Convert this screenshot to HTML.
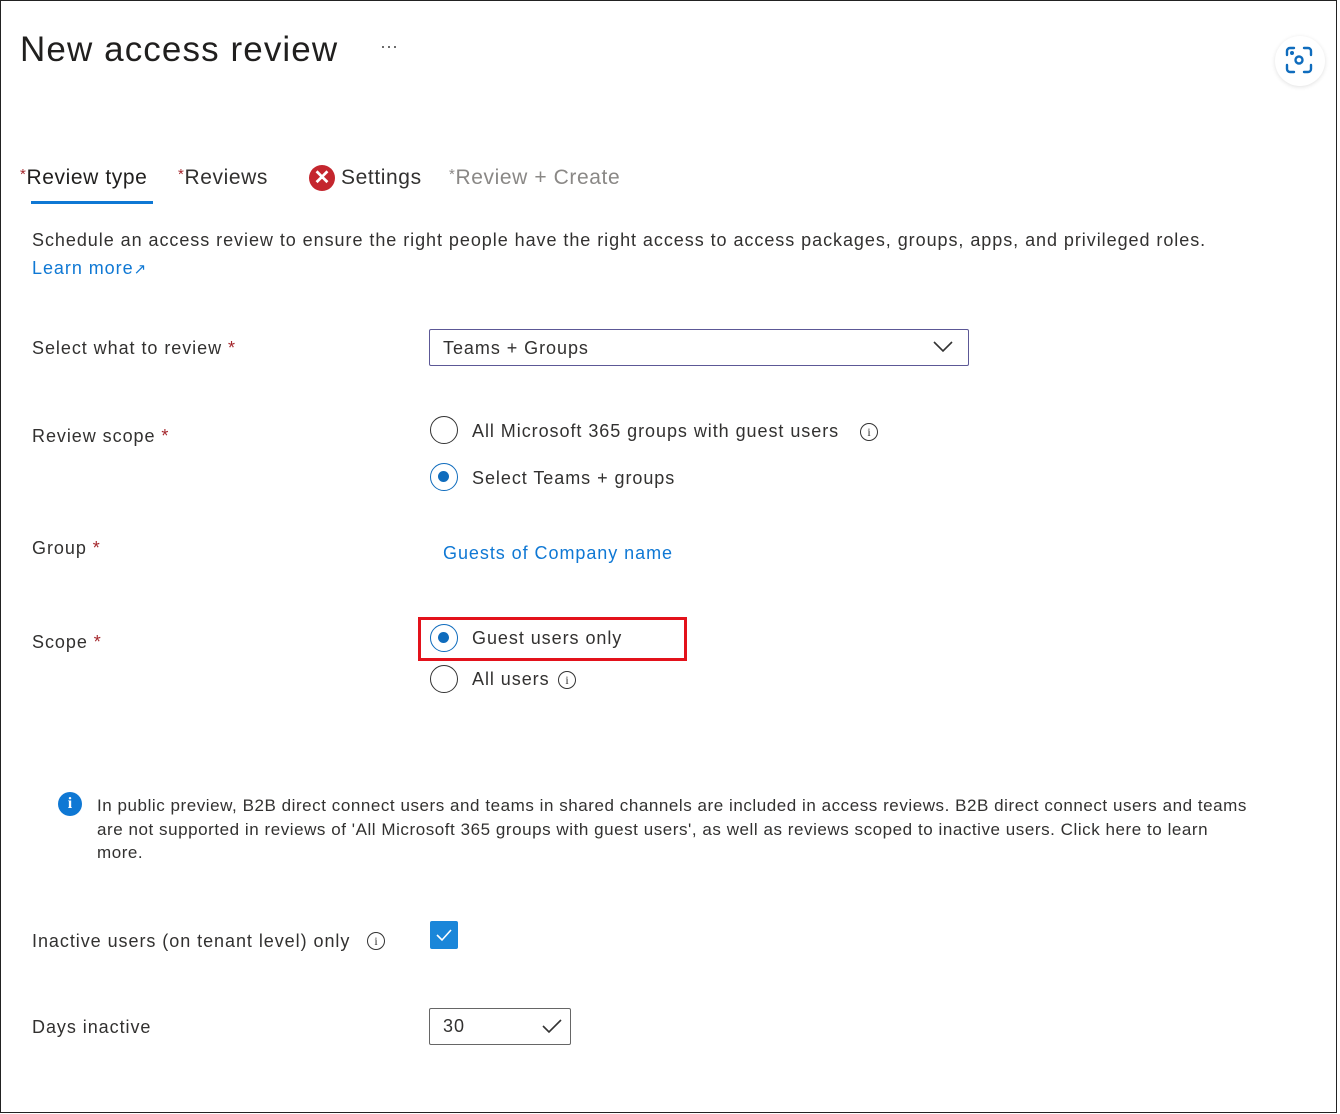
<!DOCTYPE html>
<html><head><meta charset="utf-8"><style>
*{margin:0;padding:0;box-sizing:border-box}
body{width:1340px;height:1114px;background:#fff;font-family:"Liberation Sans",sans-serif;color:#323130;position:relative;overflow:hidden}
.frame{position:absolute;left:0;top:0;width:1337px;height:1113px;border:1.5px solid #222}
.a{position:absolute;white-space:nowrap}
.t{font-size:18px;letter-spacing:0.95px}
.req{color:#a4262c}
.radio{position:absolute;width:28px;height:28px;border:1.5px solid #333;border-radius:50%}
.radio.on{border-color:#0f6cbd}
.radio.on::after{content:"";position:absolute;left:7px;top:7px;width:11px;height:11px;border-radius:50%;background:#0f6cbd}
.info{position:absolute;width:18px;height:18px;border:1.3px solid #333;border-radius:50%;font-size:12px;text-align:center;line-height:16px;font-family:"Liberation Serif",serif;letter-spacing:0}
.link{color:#0f78d4}
.tab{font-size:21px;letter-spacing:0.6px}
</style></head><body>
<div class="frame"></div>
<div class="a" style="left:20px;top:30px;font-size:35px;color:#201f1e;letter-spacing:1.1px">New access review</div>
<div class="a" style="left:380px;top:36px;font-size:18px;color:#555">···</div>
<div class="a" style="left:1275px;top:36px;width:50px;height:50px;border-radius:50%;box-shadow:0 1px 4px rgba(0,0,0,.12)"></div>
<svg class="a" style="left:1285px;top:46px" width="28" height="28" viewBox="0 0 28 28" fill="none" stroke="#0f6cbd" stroke-width="2.4" stroke-linecap="round"><path d="M2 9V5a3 3 0 0 1 3-3h4M19 2h4a3 3 0 0 1 3 3v4M26 19v4a3 3 0 0 1-3 3h-4M9 26H5a3 3 0 0 1-3-3v-4"/><circle cx="14" cy="14" r="3.5"/><circle cx="7" cy="7" r=".8" fill="#0f6cbd"/></svg>

<div class="a tab" style="left:20px;top:166px;color:#201f1e"><span class="req" style="font-size:15px;vertical-align:top">*</span>Review type</div>
<div class="a" style="left:31px;top:201px;width:122px;height:3px;background:#0f78d4"></div>
<div class="a tab" style="left:178px;top:166px;color:#323130"><span class="req" style="font-size:15px;vertical-align:top">*</span>Reviews</div>
<div class="a" style="left:309px;top:165px;width:26px;height:26px;border-radius:50%;background:#c4262e;color:#fff;font-size:20px;font-weight:bold;text-align:center;line-height:26px">✕</div>
<div class="a tab" style="left:341px;top:166px">Settings</div>
<div class="a tab" style="left:449px;top:166px;color:#8a8886"><span style="font-size:15px;vertical-align:top">*</span>Review + Create</div>

<div class="a t" style="left:32px;top:230px">Schedule an access review to ensure the right people have the right access to access packages, groups, apps, and privileged roles.</div>
<div class="a t link" style="left:32px;top:258px">Learn more<span style="font-size:15px">↗</span></div>

<div class="a t" style="left:32px;top:338px">Select what to review <span class="req">*</span></div>
<div class="a" style="left:429px;top:329px;width:540px;height:37px;border:1.5px solid #5c5896;border-radius:2px"></div>
<div class="a t" style="left:443px;top:338px">Teams + Groups</div>
<svg class="a" style="left:933px;top:341px" width="20" height="12" viewBox="0 0 20 12"><path d="M1 1l9 9 9-9" fill="none" stroke="#333" stroke-width="1.6"/></svg>

<div class="a t" style="left:32px;top:426px">Review scope <span class="req">*</span></div>
<div class="radio" style="left:430px;top:416px"></div>
<div class="a t" style="left:472px;top:421px">All Microsoft 365 groups with guest users</div>
<div class="info" style="left:860px;top:423px">i</div>
<div class="radio on" style="left:430px;top:463px"></div>
<div class="a t" style="left:472px;top:468px">Select Teams + groups</div>

<div class="a t" style="left:32px;top:538px">Group <span class="req">*</span></div>
<div class="a t link" style="left:443px;top:543px">Guests of Company name</div>

<div class="a t" style="left:32px;top:632px">Scope <span class="req">*</span></div>
<div class="a" style="left:418px;top:617px;width:269px;height:44px;border:3px solid #e3121b"></div>
<div class="radio on" style="left:430px;top:624px"></div>
<div class="a t" style="left:472px;top:628px">Guest users only</div>
<div class="radio" style="left:430px;top:665px"></div>
<div class="a t" style="left:472px;top:669px">All users</div>
<div class="info" style="left:558px;top:671px">i</div>

<div class="a" style="left:58px;top:792px;width:24px;height:24px;border-radius:50%;background:#0f78d4;color:#fff;font-weight:bold;font-size:16px;text-align:center;line-height:24px;font-family:'Liberation Serif',serif">i</div>
<div class="a" style="left:97px;top:794px;font-size:17px;line-height:23.5px;letter-spacing:0.55px">In public preview, B2B direct connect users and teams in shared channels are included in access reviews. B2B direct connect users and teams<br>are not supported in reviews of 'All Microsoft 365 groups with guest users', as well as reviews scoped to inactive users. Click here to learn<br>more.</div>

<div class="a t" style="left:32px;top:931px">Inactive users (on tenant level) only</div>
<div class="info" style="left:367px;top:932px">i</div>
<div class="a" style="left:430px;top:921px;width:28px;height:28px;background:#1a86d9;border-radius:2px"></div>
<svg class="a" style="left:434px;top:925px" width="20" height="20" viewBox="0 0 20 20"><path d="M3 10l5 5 9-10" fill="none" stroke="#fff" stroke-width="1.6"/></svg>

<div class="a t" style="left:32px;top:1017px">Days inactive</div>
<div class="a" style="left:429px;top:1008px;width:142px;height:37px;border:1.3px solid #666;border-radius:2px"></div>
<div class="a t" style="left:443px;top:1016px">30</div>
<svg class="a" style="left:541px;top:1018px" width="22" height="16" viewBox="0 0 22 16"><path d="M2 8l6 6 12-12" fill="none" stroke="#333" stroke-width="1.6"/></svg>
</body></html>
